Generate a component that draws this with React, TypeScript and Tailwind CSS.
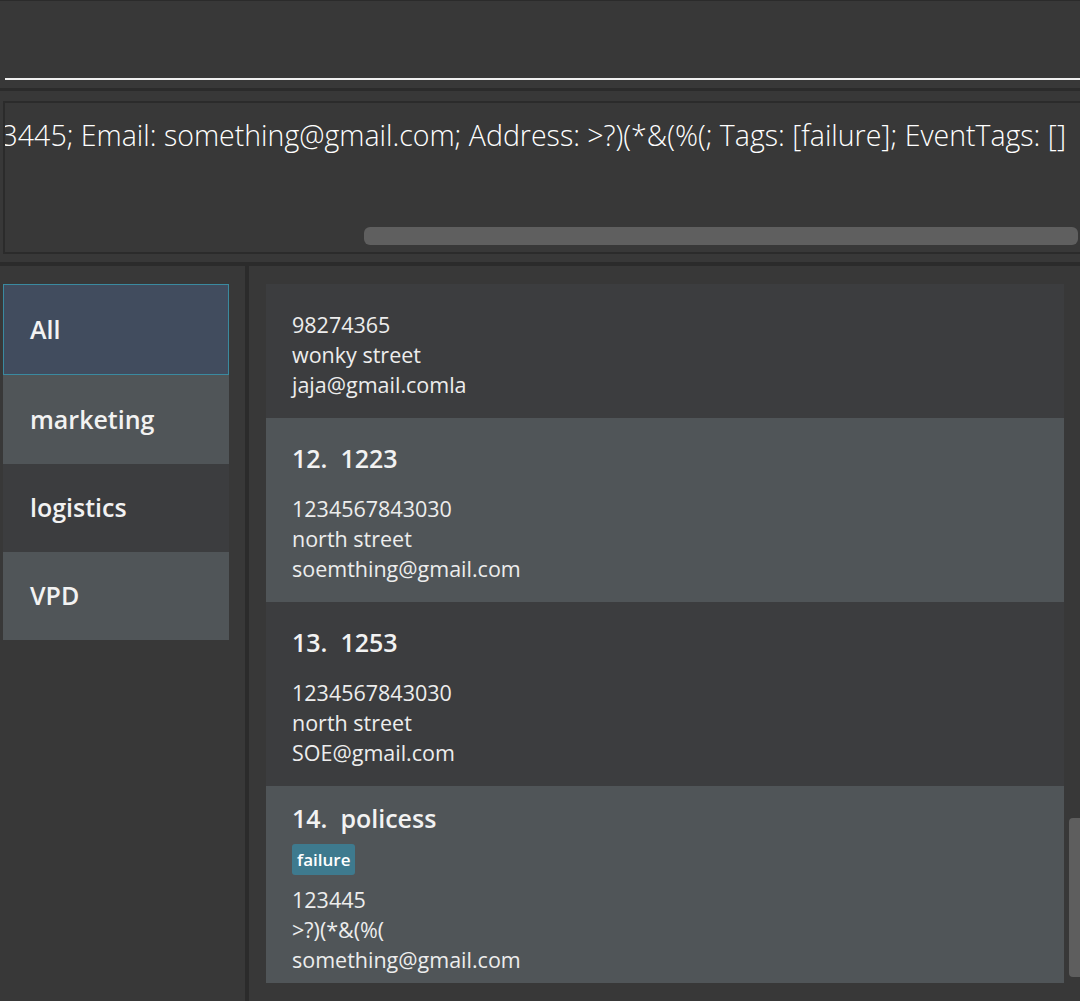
import React from "react";

type Person = {
  idx: number;
  name: string;
  tags: string[];
  lines: string[];
  bg: string;
};

function Card({ p, topPad, tall }: { p: Person; topPad: string; tall?: boolean }) {
  return (
    <div className={`${p.bg} pl-[26px] ${topPad} ${tall ? "pb-[8px]" : "pb-[18px]"}`}>
      <div className="text-[25px] font-semibold leading-[32px] text-[#f2f2f2] whitespace-nowrap">
        {p.idx}.&nbsp;&nbsp;{p.name}
      </div>
      {p.tags.length > 0 ? (
        <div className="mt-[10px] flex gap-2">
          {p.tags.map((t) => (
            <span
              key={t}
              className="h-[31px] px-[5px] rounded-[3px] bg-[#3e7a8e] text-white text-[17px] font-semibold leading-[31px]"
            >
              {t}
            </span>
          ))}
        </div>
      ) : null}
      <Lines lines={p.lines} cls={p.tags.length > 0 ? "mt-[10px]" : "mt-[20px]"} />
    </div>
  );
}

function Lines({ lines, cls }: { lines: string[]; cls: string }) {
  return (
    <div className={cls}>
      {lines.map((l, i) => (
        <div key={i} className="text-[21.5px] leading-[30px] text-[#ededed] whitespace-nowrap">
          {l}
        </div>
      ))}
    </div>
  );
}

export default function App() {
  const people: Person[] = [
    { idx: 12, name: "1223", tags: [], lines: ["1234567843030", "north street", "soemthing@gmail.com"], bg: "bg-[#505558]" },
    { idx: 13, name: "1253", tags: [], lines: ["1234567843030", "north street", "SOE@gmail.com"], bg: "bg-[#3c3d3f]" },
  ];
  const last: Person = {
    idx: 14,
    name: "policess",
    tags: ["failure"],
    lines: ["123445", ">?)(*&(%(", "something@gmail.com"],
    bg: "bg-[#505558]",
  };
  const groups = [
    { name: "All", cls: "h-[91px] bg-[#414c5e] border border-[#3a8aa0]" },
    { name: "marketing", cls: "h-[89px] bg-[#505558] border border-transparent" },
    { name: "logistics", cls: "h-[88px] bg-[#3c3d3f] border border-transparent" },
    { name: "VPD", cls: "h-[88px] bg-[#505558] border border-transparent" },
  ];

  return (
    <div className="w-[1080px] h-[1001px] bg-[#383838] flex flex-col overflow-hidden font-['Open_Sans',sans-serif]">
      <div className="h-px bg-[#2b2b2b]" />
      <div className="h-[87px] pl-[5px] flex flex-col justify-end pb-[8px]">
        <div className="h-[2px] bg-[#f0f0f0]" />
      </div>
      <div className="h-[3px] bg-[#2b2b2b]" />
      <div className="pt-[10px] pl-[3px] pb-[8px]">
        <div className="relative h-[153px] border-2 border-r-0 border-[#2b2b2b] overflow-hidden">
          <div className="flex justify-end pr-[14px] pt-[10px] overflow-hidden">
            <span className="whitespace-nowrap text-[28.5px] font-light leading-[44px] text-white">
              Edited Person: policess; Phone: 123445; Email: something@gmail.com; Address: &gt;?)(*&amp;(%(; Tags: [failure]; EventTags: []
            </span>
          </div>
          <div className="absolute left-[359px] right-[2px] top-[124px] h-[18px] rounded-[6px] bg-[#5f5f5f]" />
        </div>
      </div>
      <div className="h-[4px] bg-[#2b2b2b]" />
      <div className="flex flex-1 min-h-0">
        <div className="w-[245px] pt-[18px] pl-[3px] pr-[16px] flex flex-col">
          {groups.map((g) => (
            <div key={g.name} className={`${g.cls} flex items-center pl-[26px]`}>
              <span className="text-[25px] font-semibold text-[#f2f2f2]">{g.name}</span>
            </div>
          ))}
        </div>
        <div className="w-[4px] bg-[#2b2b2b]" />
        <div className="relative flex-1 pl-[17px] pr-[16px] pt-[18px] min-w-0">
          <div className="h-full overflow-hidden">
            <div className="bg-[#3c3d3f] pl-[26px] pt-[26px] pb-[18px]">
              <Lines lines={["98274365", "wonky street", "jaja@gmail.comla"]} cls="" />
            </div>
            {people.map((p) => (
              <Card key={p.idx} p={p} topPad="pt-[24px]" />
            ))}
            <Card p={last} topPad="pt-[16px]" tall />
          </div>
          <div className="absolute right-0 top-[552px] w-[11px] h-[159px] rounded-l-[4px] bg-[#5e5e5e]" />
        </div>
      </div>
    </div>
  );
}
